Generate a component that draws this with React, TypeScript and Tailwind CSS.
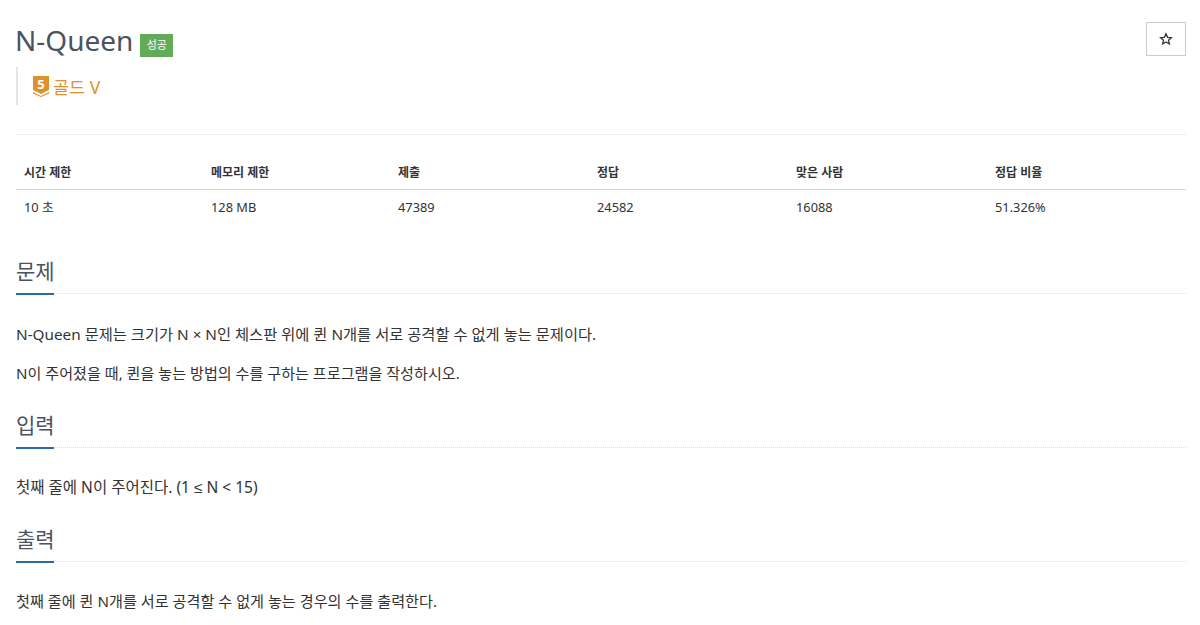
const FONT = "font-['Noto_Sans','Noto_Sans_CJK_KR',sans-serif]"

const HEADERS = ['시간 제한', '메모리 제한', '제출', '정답', '맞은 사람', '정답 비율']
const VALUES = ['10 초', '128 MB', '47389', '24582', '16088', '51.326%']

function Heading({ title }: { title: string }) {
  return (
    <div className="h-[38px] border-b border-dotted border-[#dddddd] relative">
      <h2 className="text-[21px] leading-[30px] text-[#4b535e] font-normal">{title}</h2>
      <div className="absolute left-0 bottom-[-2px] w-[38px] h-[2px] bg-[#2a68ae]" />
    </div>
  )
}

export default function App() {
  return (
    <div className={`${FONT} w-[1200px] h-[625px] overflow-hidden bg-white pl-[16px] pr-[14px] pt-[21px] text-[#333333]`}>
      {/* Title row */}
      <div className="flex justify-between items-start h-[46px]">
        <div className="flex items-center">
          <h1 className="text-[28px] leading-[38px] text-[#4b535e] font-normal -ml-[1px]">N-Queen</h1>
          <span className="ml-[7px] mt-[10px] w-[33px] h-[23px] bg-[#62ab58] text-white text-[11px] flex items-center justify-center">성공</span>
        </div>
        <button className="w-[40px] h-[34px] mt-[1px] border border-[#cccccc] flex items-center justify-center">
          <svg width="14" height="14" viewBox="0 0 24 24" fill="none" stroke="#333333" strokeWidth="2.2">
            <path d="M12 3l2.7 6.1 6.6.6-5 4.4 1.5 6.5-5.8-3.4-5.8 3.4 1.5-6.5-5-4.4 6.6-.6z" />
          </svg>
        </button>
      </div>

      {/* Tier */}
      <div className="h-[38px] border-l-[2px] border-[#e6e6e6] flex items-center pl-[15px]">
        <svg width="16" height="21" viewBox="0 0 16 21">
          <path d="M0 0h16v14l-8 4-8-4z" fill="#e0912b" />
          <path d="M0 16l8 4 8-4v1.5l-8 3.5-8-3.5z" fill="#e0912b" />
          <text x="8" y="12.5" textAnchor="middle" fontSize="13" fontWeight="700" fill="#ffffff">5</text>
        </svg>
        <span className="ml-[4px] text-[17.5px] text-[#e0912b] leading-[26px] pt-[1px]">골드 V</span>
      </div>

      <div className="mt-[29px] border-t border-[#eeeeee]" />

      {/* Stats */}
      <div className="mt-[20px] grid grid-cols-[187px_187px_199px_199px_199px_199px]">
        {HEADERS.map(h => (
          <div key={h} className="h-[35px] px-[8px] pt-[1px] text-[12px] font-bold leading-[34px] border-b border-[#d4d4d4]">{h}</div>
        ))}
        {VALUES.map(v => (
          <div key={v} className="h-[34px] px-[8px] text-[12.8px] leading-[34px]">{v}</div>
        ))}
      </div>

      <div className="mt-[32px]">
        <Heading title="문제" />
        <p className="mt-[28px] text-[15.3px] leading-[24px]">N-Queen 문제는 크기가 N × N인 체스판 위에 퀸 N개를 서로 공격할 수 없게 놓는 문제이다.</p>
        <p className="mt-[15px] text-[15.1px] leading-[24px]">N이 주어졌을 때, 퀸을 놓는 방법의 수를 구하는 프로그램을 작성하시오.</p>
      </div>

      <div className="mt-[25px]">
        <Heading title="입력" />
        <p className="mt-[27px] text-[15.5px] leading-[24px]">첫째 줄에 N이 주어진다. (1 <span className="font-['Liberation_Sans']">≤</span> N &lt; 15)</p>
      </div>

      <div className="mt-[24px]">
        <Heading title="출력" />
        <p className="mt-[27px] text-[15.15px] leading-[24px]">첫째 줄에 퀸 N개를 서로 공격할 수 없게 놓는 경우의 수를 출력한다.</p>
      </div>
    </div>
  )
}
